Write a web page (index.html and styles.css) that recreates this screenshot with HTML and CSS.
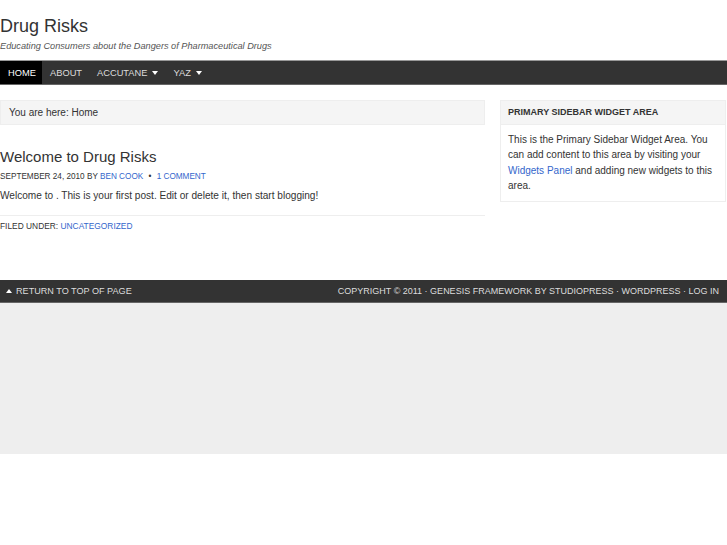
FILE: index.html
```html
<!DOCTYPE html>
<html>
<head>
<meta charset="utf-8">
<link rel="stylesheet" href="styles.css">
</head>
<body>
<div class="page">
  <header class="site-header">
    <h1 class="site-title">Drug Risks</h1>
    <p class="site-desc">Educating Consumers about the Dangers of Pharmaceutical Drugs</p>
  </header>
  <nav class="nav">
    <a class="nav-item current">HOME</a>
    <a class="nav-item">ABOUT</a>
    <a class="nav-item">ACCUTANE <span class="caret"></span></a>
    <a class="nav-item">YAZ <span class="caret"></span></a>
  </nav>
  <div class="inner">
    <main class="content">
      <div class="breadcrumb">You are here: Home</div>
      <article class="post">
        <h2 class="post-title">Welcome to Drug Risks</h2>
        <div class="post-info">SEPTEMBER 24, 2010 BY <a class="link">BEN COOK</a> <span class="bullet">&#8226;</span> <a class="link">1 COMMENT</a></div>
        <p class="post-body">Welcome to . This is your first post. Edit or delete it, then start blogging!</p>
        <div class="post-meta">FILED UNDER: <a class="link">UNCATEGORIZED</a></div>
      </article>
    </main>
    <aside class="sidebar">
      <div class="widget">
        <h4 class="widget-title">PRIMARY SIDEBAR WIDGET AREA</h4>
        <p class="widget-body">This is the Primary Sidebar Widget Area. You can add content to this area by visiting your <a class="link">Widgets Panel</a> and adding new widgets to this area.</p>
      </div>
    </aside>
  </div>
  <footer class="footer">
    <div class="gototop"><span class="up"></span>RETURN TO TOP OF PAGE</div>
    <div class="creds">COPYRIGHT &copy; 2011 &middot; GENESIS FRAMEWORK BY STUDIOPRESS &middot; WORDPRESS &middot; LOG IN</div>
  </footer>
  <div class="below"></div>
</div>
</body>
</html>
```
FILE: styles.css
```css
* { box-sizing: border-box; }
body {
  margin: 0;
  background: #fff;
  font-family: "Liberation Sans", Arial, sans-serif;
  color: #333;
}
.site-header { padding: 14px 0 0 0; height: 60px; }
.site-title {
  margin: 0;
  font-size: 18px;
  font-weight: normal;
  color: #333;
  line-height: 24px;
}
.site-desc {
  margin: 1px 0 0 0;
  font-size: 9.2px;
  font-style: italic;
  color: #555;
  line-height: 14px;
}
.nav {
  display: flex;
  height: 25px;
  background: #333;
  border-top: 1px solid #999;
  border-bottom: 1px solid #666;
}
.nav-item {
  display: flex;
  align-items: center;
  padding: 0 7px 0 8px;
  font-size: 9.3px;
  color: #ddd;
}
.nav-item.current { background: #000; color: #fff; padding: 0 8px; width: 42px; }
.caret {
  display: inline-block;
  width: 0; height: 0;
  border-left: 3.5px solid transparent;
  border-right: 3.5px solid transparent;
  border-top: 4px solid #fff;
  margin-left: 5px;
}
.inner {
  display: flex;
  gap: 15px;
  padding-top: 15px;
  height: 195px;
}
.content { width: 485px; }
.breadcrumb {
  background: #f5f5f5;
  border: 1px solid #eee;
  height: 25px;
  padding: 0 8px;
  font-size: 10px;
  line-height: 23px;
  color: #333;
}
.post-title {
  margin: 22px 0 0 0;
  font-size: 15px;
  font-weight: normal;
  line-height: 20px;
  color: #333;
}
.post-info {
  margin-top: 4px;
  font-size: 8.2px;
  line-height: 12px;
  color: #333;
}
.bullet { margin: 0 3px; }
.link { color: #36c; text-decoration: none; }
.post-body {
  margin: 6px 0 0 0;
  font-size: 10.1px;
  line-height: 14px;
  padding-bottom: 12px;
  border-bottom: 1px solid #eee;
}
.post-meta {
  margin-top: 5px;
  font-size: 8.4px;
  line-height: 10px;
}
.sidebar { width: 226px; }
.widget { border: 1px solid #eee; }
.widget-title {
  margin: 0;
  background: #f5f5f5;
  border-bottom: 1px solid #eee;
  height: 24px;
  padding: 0 7px;
  font-size: 9px;
  line-height: 23px;
  font-weight: bold;
  color: #333;
}
.widget-body {
  margin: 0;
  padding: 7px 7px 8px 7px;
  font-size: 10px;
  line-height: 15.3px;
}
.footer {
  display: flex;
  justify-content: space-between;
  align-items: center;
  height: 23px;
  background: #333;
  border-bottom: 1px solid #666;
  padding: 0 8px 0 6px;
  font-size: 9px;
  color: #ddd;
}
.gototop { font-size: 9.1px; }
.up {
  display: inline-block;
  width: 0; height: 0;
  border-left: 3.5px solid transparent;
  border-right: 3.5px solid transparent;
  border-bottom: 4px solid #fff;
  margin-right: 4px;
  vertical-align: 1px;
}
.below { height: 151px; background: #eee; }
```
